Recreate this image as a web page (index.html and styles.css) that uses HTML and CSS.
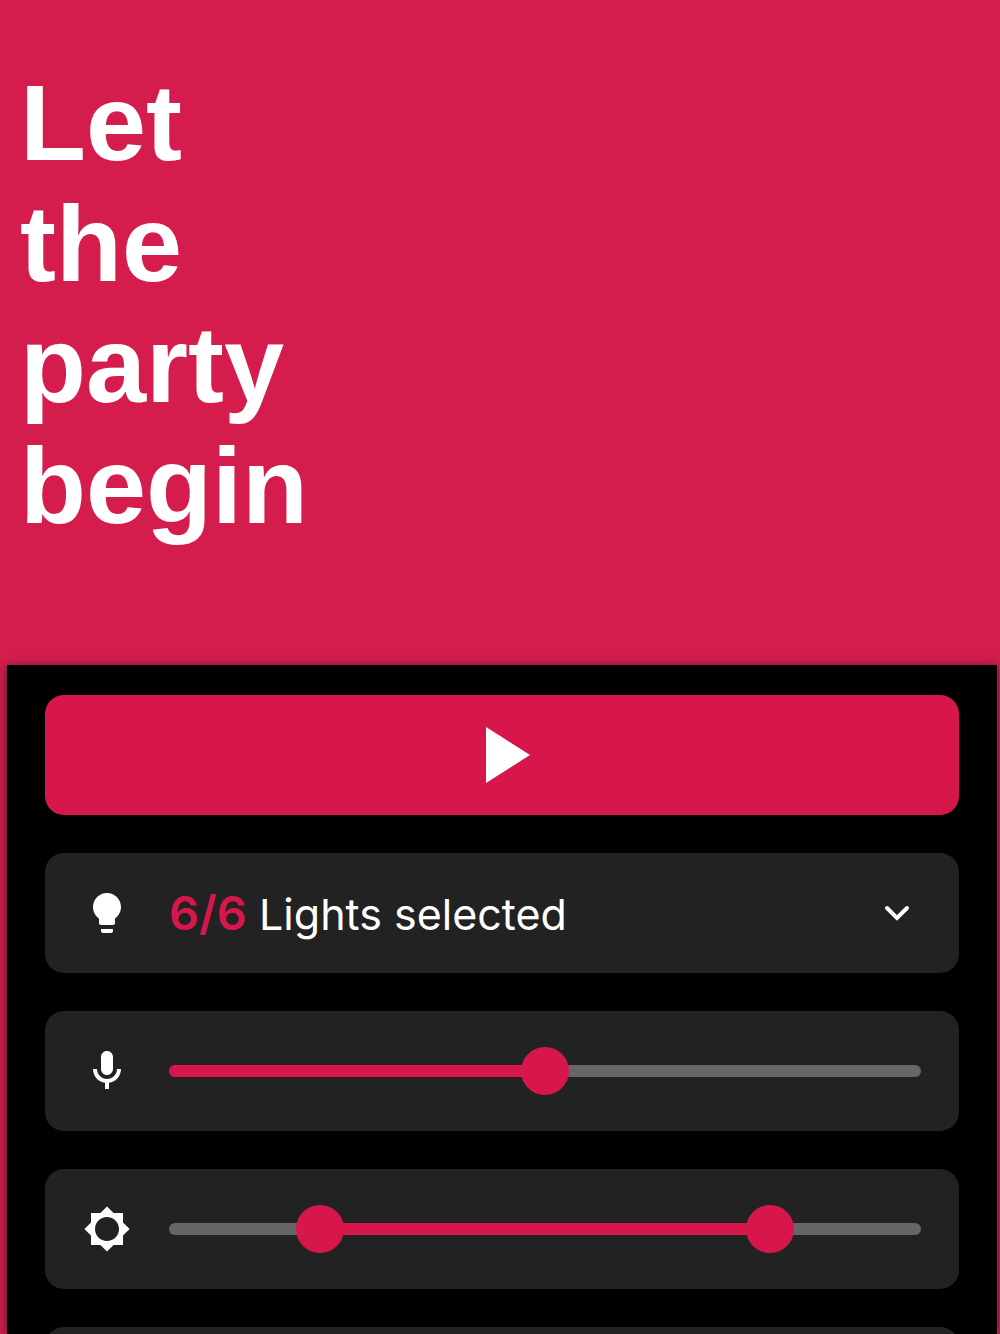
FILE: index.html
```html
<!DOCTYPE html>
<html lang="en">
  <head>
    <title>Let the party begin</title>
    <meta charset="utf-8">
    <meta name="viewport" content="width=device-width, initial-scale=1">
    <link rel="stylesheet" href="styles.css">
  </head>
  <body>
    <header>
      <h1>Let<br>the<br>party<br>begin</h1>
    </header>

    <main>
      <button class="play" type="button" aria-label="Play">
        <svg viewBox="0 0 24 24"><path d="M8 5v14l11-7z"/></svg>
      </button>

      <button class="card" type="button">
        <svg class="icon" viewBox="0 0 24 24"><path d="M9 21c0 .55.45 1 1 1h4c.55 0 1-.45 1-1v-1H9v1zM12 2C8.14 2 5 5.14 5 9c0 2.38 1.19 4.47 3 5.74V17c0 .55.45 1 1 1h6c.55 0 1-.45 1-1v-2.26c1.81-1.27 3-3.36 3-5.74 0-3.86-3.14-7-7-7z"/></svg>
        <span class="label"><span class="count">6/6</span> Lights selected</span>
        <svg class="icon chevron" viewBox="0 0 24 24"><path d="M7 9.5l5 5 5-5"/></svg>
      </button>

      <div class="card">
        <svg class="icon" viewBox="0 0 24 24"><path d="M12 14c1.66 0 3-1.34 3-3V5c0-1.66-1.34-3-3-3S9 3.34 9 5v6c0 1.66 1.34 3 3 3zM17 11c0 2.76-2.24 5-5 5s-5-2.24-5-5H5c0 3.53 2.61 6.43 6 6.92V21h2v-3.08c3.39-.49 6-3.39 6-6.92h-2z"/></svg>
        <div class="slider mic">
          <input type="range" aria-label="Microphone sensitivity" min="0" max="100" value="50">
        </div>
      </div>

      <div class="card">
        <svg class="icon" viewBox="0 0 24 24"><path d="M20 15.31L23.31 12 20 8.69V4h-4.69L12 .69 8.69 4H4v4.69L.69 12 4 15.31V20h4.69L12 23.31 15.31 20H20v-4.69zM12 18c-3.31 0-6-2.69-6-6s2.69-6 6-6 6 2.69 6 6-2.69 6-6 6z"/></svg>
        <div class="slider brightness">
          <input type="range" aria-label="Minimum brightness" min="0" max="100" value="18">
          <input type="range" aria-label="Maximum brightness" min="0" max="100" value="82">
        </div>
      </div>

      <div class="card"></div>
    </main>
    <script src="script.js"></script>
  </body>
</html>
```

FILE: script.js
```javascript
// keep the coloured part of each track in step with its thumbs
for (let slider of document.getElementsByClassName("slider")) {
  let inputs = slider.querySelectorAll("input");

  slider.addEventListener("input", function() {
    let values = Array.from(inputs).map(input => Number(input.value));

    slider.style.setProperty("--from", values.length > 1 ? Math.min(...values) : 0);
    slider.style.setProperty("--to", Math.max(...values));
  });
}
```

FILE: styles.css
```css
:root {
  --color-background: #d51d4d;
  --color-accent: #d7174c;
  --color-panel: #000;
  --color-card: #222;
  --color-track: #666;
  --color-text: #fff;
}
* {
  box-sizing: border-box;
}
body {
  display: flex;
  flex-direction: column;
  height: 100vh;
  margin: 0;
  overflow: hidden;
  background-color: var(--color-background);
  color: var(--color-text);
  font-family: Inter, "Liberation Sans", sans-serif;
}
header {
  flex: none;
  padding: 62px 20px 119px 20px;
}
h1 {
  margin: 0;
  font-family: "Liberation Sans", Arial, sans-serif;
  font-size: 108px;
  line-height: 121px;
}
main {
  display: flex;
  flex: 1;
  flex-direction: column;
  gap: 38px;
  min-height: 0;
  margin: 0 3px 0 7px;
  padding: 30px 38px 0 38px;
  overflow: hidden;
  background-color: var(--color-panel);
  box-shadow: 0 2px 10px rgba(45, 30, 55, 0.9);
}
button {
  border: 0;
  color: inherit;
  font: inherit;
  cursor: pointer;
}
svg {
  fill: var(--color-text);
}
.play,
.card {
  display: flex;
  flex: none;
  align-items: center;
  width: 100%;
  height: 120px;
  border-radius: 19px;
}
.play {
  justify-content: center;
  background-color: var(--color-accent);
}
.play svg {
  width: 96px;
  height: 96px;
}
.card {
  gap: 38px;
  padding: 0 38px;
  background-color: var(--color-card);
  text-align: left;
}
.icon {
  flex: none;
  width: 48px;
  height: 48px;
}
.chevron {
  fill: none;
  stroke: var(--color-text);
  stroke-width: 2;
  stroke-linecap: round;
}
.label {
  flex: 1;
  padding-bottom: 2px;
  font-size: 43px;
}
.count {
  color: var(--color-accent);
  font-size: 47px;
  font-weight: 600;
}
.slider {
  /* thumb centres travel between 24px and 100% - 24px */
  --start: calc(24px + (100% - 48px) * var(--from) / 100);
  --end: calc(24px + (100% - 48px) * var(--to) / 100);
  position: relative;
  flex: 1;
  height: 12px;
  border-radius: 6px;
  background: linear-gradient(to right, var(--color-track) var(--start), var(--color-accent) var(--start), var(--color-accent) var(--end), var(--color-track) var(--end));
}
.slider.mic {
  --from: 0;
  --to: 50;
  --start: 0px;
}
.slider.brightness {
  --from: 18;
  --to: 82;
}
.slider input {
  -webkit-appearance: none;
  appearance: none;
  position: absolute;
  top: -18px;
  left: 0;
  width: 100%;
  height: 48px;
  margin: 0;
  background: none;
  pointer-events: none;
}
.slider input::-webkit-slider-thumb {
  -webkit-appearance: none;
  width: 48px;
  height: 48px;
  border-radius: 50%;
  background-color: var(--color-accent);
  cursor: pointer;
  pointer-events: auto;
}
.slider input::-moz-range-thumb {
  width: 48px;
  height: 48px;
  border: 0;
  border-radius: 50%;
  background-color: var(--color-accent);
  cursor: pointer;
  pointer-events: auto;
}
```
